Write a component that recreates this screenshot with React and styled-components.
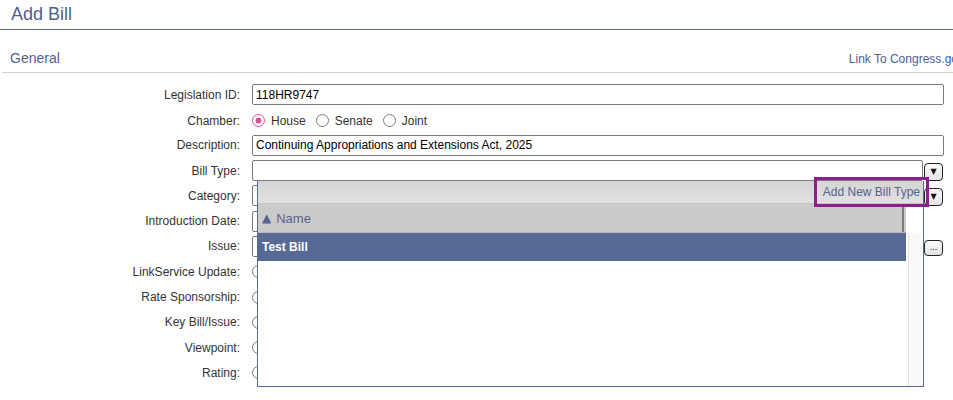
import React from 'react';
import styled, { createGlobalStyle } from 'styled-components';

const GlobalStyle = createGlobalStyle`
  html, body { margin: 0; padding: 0; background: #fff; overflow: hidden; }
  body { font-family: "Liberation Sans", Arial, sans-serif; }
  *, *::before, *::after { box-sizing: border-box; }
`;

const Page = styled.div`
  width: 100%;
  height: 400px;
  overflow: hidden;
`;

const PageTitle = styled.h1`
  margin: 0;
  padding-left: 11px;
  height: 30px;
  font-size: 18px;
  font-weight: normal;
  line-height: 29px;
  color: #4f5f8e;
  border-bottom: 1px solid #5d6c94;
`;

const SectionHeader = styled.div`
  display: flex;
  justify-content: space-between;
  align-items: baseline;
  margin: 15px -11px 0 2px;
  padding-left: 8px;
  height: 28px;
  line-height: 27px;
  border-bottom: 1px solid #cfcfcf;
  white-space: nowrap;
`;

const SectionTitle = styled.span`
  font-size: 14px;
  color: #52648f;
`;

const CongressLink = styled.a`
  font-size: 12px;
  color: #4b5e8f;
  text-decoration: none;
`;

const Form = styled.div`
  display: grid;
  grid-template-columns: 240px 692px;
  column-gap: 12px;
  grid-auto-rows: 25.3px;
  padding-top: 9px;
`;

const Label = styled.div`
  align-self: center;
  text-align: right;
  font-size: 12px;
  color: #333;
  white-space: nowrap;
  padding-top: ${(p) => (p.$radio ? '2px' : '0')};
`;

const Field = styled.div`
  display: flex;
  align-items: center;
  position: relative;
`;

const TextInput = styled.input`
  height: 21px;
  width: ${(p) => p.$width || '100%'};
  flex: ${(p) => (p.$width ? '0 0 auto' : '1 1 auto')};
  padding: 0 3px;
  border: 1px solid #7a7a7a;
  border-radius: 2px;
  font: 12px "Liberation Sans", Arial, sans-serif;
  color: #000;
  background: #fff;
  outline: none;
`;

const InputBox = styled.div`
  position: relative;
  flex: 0 0 671px;
  display: flex;
`;

const SmallButton = styled.div`
  flex: 0 0 19px;
  width: 19px;
  height: ${(p) => p.$h || 18}px;
  margin-left: 1px;
  margin-top: 3px;
  border: 1.5px solid #222;
  border-radius: 4px;
  background: linear-gradient(#fbfbfb, #e4e4e4);
  display: flex;
  align-items: center;
  justify-content: center;
  font-family: "DejaVu Sans", sans-serif;
  font-size: ${(p) => p.$fs || 8}px;
  color: #111;
  line-height: 1;
`;

const RadioGroup = styled.div`
  display: flex;
  align-items: center;
  font-size: 12px;
  color: #333;
  padding-top: ${(p) => (p.$shift ? '2px' : '0')};
`;

const RadioOption = styled.label`
  display: flex;
  align-items: center;
  margin-right: 10px;
`;

const RadioDot = styled.span`
  width: 13px;
  height: 13px;
  border-radius: 50%;
  margin-right: 6px;
  border: ${(p) => (p.$checked ? '1.5px solid #ec4b93' : '1px solid #7a7a7a')};
  background: ${(p) =>
    p.$checked
      ? 'radial-gradient(circle, #ec4b93 0 2.7px, #fff 3.2px)'
      : '#fff'};
`;

/* Dropdown panel */
const Panel = styled.div`
  position: absolute;
  top: 100%;
  left: 5px;
  right: -1px;
  height: 206px;
  background: #fff;
  border: 1px solid #5a6a95;
  border-top: none;
  z-index: 10;
  display: flex;
  flex-direction: column;
`;

const Toolbar = styled.div`
  flex: 0 0 23px;
  display: flex;
  justify-content: flex-end;
  align-items: center;
  padding-right: 3px;
  background: linear-gradient(#d5d5d5, #e1e1e1);
  border-bottom: 1px solid #c4c4c4;
`;

const AddTypeLink = styled.span`
  font-size: 12px;
  color: #52648f;
`;

const Highlight = styled.div`
  position: absolute;
  left: 556px;
  top: -4px;
  width: 115px;
  height: 30px;
  border: 3px solid #8e1d8e;
  z-index: 12;
  pointer-events: none;
`;

const GridBody = styled.div`
  flex: 1;
  display: flex;
  min-height: 0;
`;

const GridMain = styled.div`
  flex: 1;
  display: flex;
  flex-direction: column;
`;

const GridHeader = styled.div`
  position: relative;
  flex: 0 0 29px;
  display: flex;
  align-items: center;
  padding-left: 4px;
  background: #cbcbcb;
  border-bottom: 1px solid #bababa;
  font-size: 13px;
  color: #52648f;
  &::after {
    content: '';
    position: absolute;
    top: 0;
    bottom: 0;
    right: 2px;
    width: 2px;
    background: #7c7c7c;
  }
`;

const SortArrow = styled.span`
  font-family: "DejaVu Sans", sans-serif;
  font-size: 12px;
  margin-right: 5px;
`;

const GridRow = styled.div`
  flex: 0 0 28px;
  display: flex;
  align-items: center;
  padding-left: 4px;
  font-size: 12px;
  font-weight: bold;
  color: ${(p) => (p.$selected ? '#fff' : '#333')};
  background: ${(p) => (p.$selected ? '#566a95' : '#fff')};
`;

const ScrollColumn = styled.div`
  flex: 0 0 17px;
  padding-top: 29px;
  display: flex;
`;

const ScrollTrack = styled.div`
  flex: 1;
  margin-left: 2px;
  border-left: 1px solid #e4e4e4;
  background: #f9f9f9;
`;

function Radio({ checked, children }) {
  return (
    <RadioOption>
      <RadioDot $checked={checked} />
      {children}
    </RadioOption>
  );
}

const yesNoRows = ['LinkService Update:', 'Rate Sponsorship:', 'Key Bill/Issue:', 'Viewpoint:', 'Rating:'];

export default function App() {
  return (
    <Page>
      <GlobalStyle />
      <PageTitle>Add Bill</PageTitle>
      <SectionHeader>
        <SectionTitle>General</SectionTitle>
        <CongressLink href="#">Link To Congress.gov</CongressLink>
      </SectionHeader>
      <Form>
        <Label>Legislation ID:</Label>
        <Field>
          <TextInput defaultValue="118HR9747" readOnly />
        </Field>

        <Label $radio>Chamber:</Label>
        <Field>
          <RadioGroup $shift>
            <Radio checked>House</Radio>
            <Radio>Senate</Radio>
            <Radio>Joint</Radio>
          </RadioGroup>
        </Field>

        <Label>Description:</Label>
        <Field>
          <TextInput defaultValue="Continuing Appropriations and Extensions Act, 2025" readOnly />
        </Field>

        <Label>Bill Type:</Label>
        <Field>
          <InputBox>
            <TextInput defaultValue="" readOnly />
            <Panel>
              <Toolbar>
                <AddTypeLink>Add New Bill Type</AddTypeLink>
              </Toolbar>
              <Highlight />
              <GridBody>
                <GridMain>
                  <GridHeader>
                    <SortArrow>▲</SortArrow>Name
                  </GridHeader>
                  <GridRow $selected>Test Bill</GridRow>
                </GridMain>
                <ScrollColumn>
                  <ScrollTrack />
                </ScrollColumn>
              </GridBody>
            </Panel>
          </InputBox>
          <SmallButton>▼</SmallButton>
        </Field>

        <Label>Category:</Label>
        <Field>
          <InputBox>
            <TextInput defaultValue="" readOnly />
          </InputBox>
          <SmallButton>▼</SmallButton>
        </Field>

        <Label>Introduction Date:</Label>
        <Field>
          <TextInput $width="120px" defaultValue="" readOnly />
        </Field>

        <Label>Issue:</Label>
        <Field>
          <InputBox>
            <TextInput defaultValue="" readOnly />
          </InputBox>
          <SmallButton $h={16} $fs={8}>...</SmallButton>
        </Field>

        {yesNoRows.map((l) => (
          <React.Fragment key={l}>
            <Label>{l}</Label>
            <Field>
              <RadioGroup>
                <Radio>Yes</Radio>
                <Radio>No</Radio>
              </RadioGroup>
            </Field>
          </React.Fragment>
        ))}
      </Form>
    </Page>
  );
}
